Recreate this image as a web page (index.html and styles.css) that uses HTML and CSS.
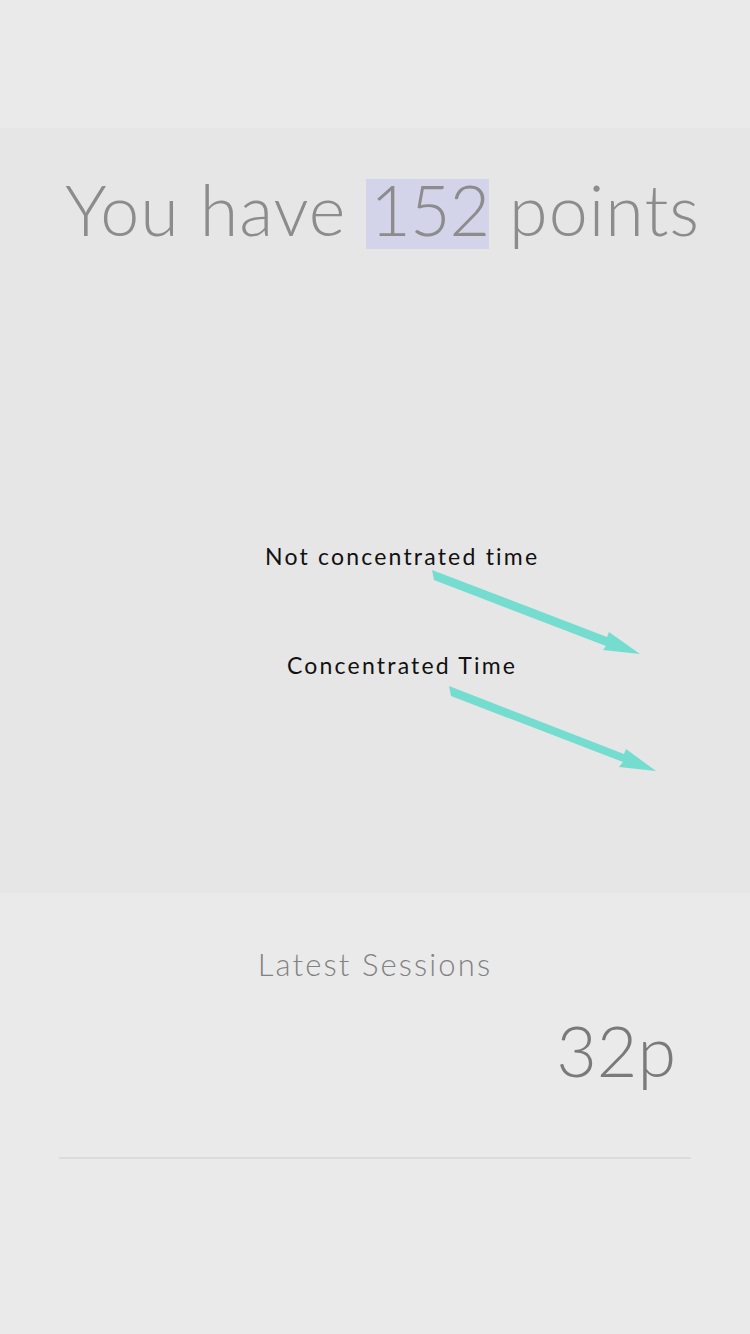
FILE: index.html
```html
<!DOCTYPE html>
<html>
<head>
<meta charset="utf-8">
<link rel="stylesheet" href="styles.css">
</head>
<body>
<div class="top"></div>
<section class="panel">
  <h1 class="title">You have <span class="hl">152</span> points</h1>
  <svg class="arrows" viewBox="0 128 750 765" width="750" height="765">
    <g fill="#74ddd0" stroke="none">
      <polygon points="432,570 434,580 606,646 603,650 640,654 609,632 607,637"/>
      <polygon points="449,686 451,696 623,762 619,767 656,771 626,749 624,754"/>
    </g>
  </svg>
  <div class="label label-1">Not concentrated time</div>
  <div class="label label-2">Concentrated Time</div>
</section>
<section class="sessions">
  <h2 class="sessions-title">Latest Sessions</h2>
  <div class="session-row">
    <span class="session-points">32p</span>
  </div>
</section>
</body>
</html>
```
FILE: styles.css
```css
html, body {
  margin: 0;
  padding: 0;
}
body {
  width: 750px;
  height: 1334px;
  background: #eaeaea;
  font-family: Lato, "Open Sans", "Liberation Sans", sans-serif;
  overflow: hidden;
}
.top {
  height: 128px;
}
.panel {
  position: relative;
  height: 765px;
  background: #e6e6e6;
  box-sizing: border-box;
  padding-top: 51px;
}
.title {
  margin: 0;
  padding-left: 15px;
  text-align: center;
  font-weight: 300;
  font-size: 70px;
  line-height: 60px;
  color: #8c8c8c;
  letter-spacing: 1px;
}
.hl {
  display: inline-block;
  line-height: 60px;
  padding-bottom: 10px;
  padding-left: 4px;
  letter-spacing: -1px;
  background: #d3d3ea;
}
.arrows {
  position: absolute;
  left: 0;
  top: 0;
}
.label {
  position: absolute;
  font-size: 23px;
  line-height: 23px;
  letter-spacing: 2.2px;
  color: #111;
  white-space: nowrap;
}
.label-1 {
  left: 265px;
  top: 417px;
}
.label-2 {
  left: 287px;
  top: 526px;
}
.sessions {
  display: flex;
  flex-direction: column;
  padding-top: 51px;
}
.sessions-title {
  margin: 0;
  text-align: center;
  font-weight: 300;
  font-size: 31px;
  line-height: 40px;
  color: #828282;
  letter-spacing: 2.1px;
}
.session-row {
  margin: 0 59px;
  display: flex;
  justify-content: flex-end;
  padding: 24px 15px 65px 0;
  border-bottom: 2px solid #dcdcdc;
}
.session-points {
  font-weight: 300;
  font-size: 70px;
  line-height: 84px;
  color: #7a7a7a;
}
```
